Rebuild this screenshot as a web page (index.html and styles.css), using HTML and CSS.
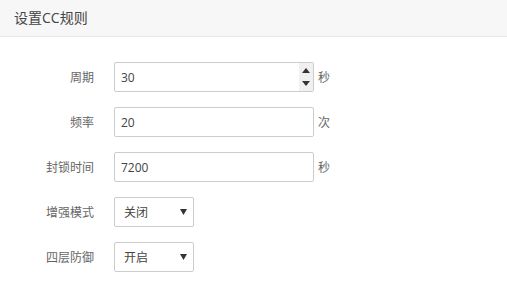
FILE: index.html
```html
<!DOCTYPE html>
<html lang="zh-CN">
<head>
<meta charset="utf-8">
<title>设置CC规则</title>
<link rel="stylesheet" href="styles.css">
</head>
<body>
<div class="panel">
  <div class="panel-header">设置CC规则</div>
  <div class="form">
    <div class="row">
      <label class="label">周期</label>
      <div class="field number">
        <span class="value">30</span>
        <div class="spinner">
          <svg width="8" height="5" viewBox="0 0 8 5"><path d="M0 5 L4 0 L8 5 Z" fill="#333"/></svg>
          <svg width="8" height="5" viewBox="0 0 8 5"><path d="M0 0 L4 5 L8 0 Z" fill="#333"/></svg>
        </div>
      </div>
      <span class="unit">秒</span>
    </div>
    <div class="row">
      <label class="label">频率</label>
      <div class="field"><span class="value">20</span></div>
      <span class="unit">次</span>
    </div>
    <div class="row">
      <label class="label">封锁时间</label>
      <div class="field"><span class="value">7200</span></div>
      <span class="unit">秒</span>
    </div>
    <div class="row">
      <label class="label">增强模式</label>
      <div class="select">
        <span class="value">关闭</span>
        <svg class="caret" width="7" height="6" viewBox="0 0 7 6"><path d="M0 0 L7 0 L3.5 6 Z" fill="#333"/></svg>
      </div>
    </div>
    <div class="row">
      <label class="label">四层防御</label>
      <div class="select">
        <span class="value">开启</span>
        <svg class="caret" width="7" height="6" viewBox="0 0 7 6"><path d="M0 0 L7 0 L3.5 6 Z" fill="#333"/></svg>
      </div>
    </div>
  </div>
</div>
</body>
</html>
```
FILE: styles.css
```css
html, body {
  margin: 0;
  padding: 0;
  background: #fff;
}
body {
  font-family: "Open Sans", "Noto Sans CJK SC", sans-serif;
  color: #444;
  font-size: 12px;
}
.panel-header {
  height: 36px;
  line-height: 36px;
  padding-left: 14px;
  font-size: 14px;
  color: #444;
  background: #f7f7f7;
  border-bottom: 1px solid #e8e8e8;
}
.form {
  padding-top: 25px;
  display: flex;
  flex-direction: column;
  gap: 15px;
}
.row {
  display: flex;
  align-items: center;
  height: 30px;
}
.label {
  width: 94px;
  text-align: right;
  margin-right: 20px;
  color: #666;
}
.field {
  box-sizing: border-box;
  width: 200px;
  height: 30px;
  border: 1px solid #ccc;
  border-radius: 2px;
  display: flex;
  align-items: center;
  padding-left: 6px;
  color: #444;
}
.field .value {
  flex: 1;
}
.spinner {
  width: 14px;
  height: 28px;
  background: #f0f0f0;
  display: flex;
  flex-direction: column;
  align-items: center;
  justify-content: space-between;
  padding: 5px 0;
  box-sizing: border-box;
}
.spinner svg {
  display: block;
}
.unit {
  margin-left: 4px;
  color: #666;
}
.select {
  box-sizing: border-box;
  width: 80px;
  height: 30px;
  border: 1px solid #ccc;
  border-radius: 2px;
  display: flex;
  align-items: center;
  justify-content: space-between;
  padding: 0 6px 0 9px;
  color: #444;
}
.caret {
  display: block;
}
```
